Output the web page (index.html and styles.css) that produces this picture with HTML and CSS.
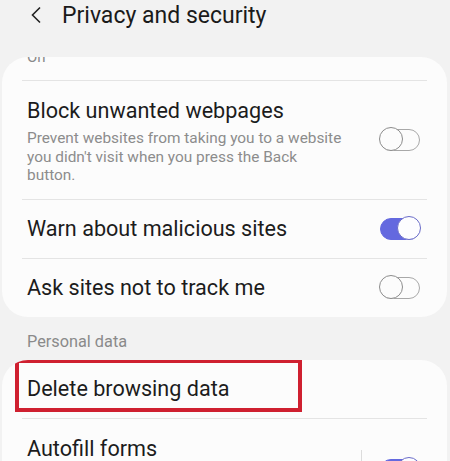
FILE: index.html
```html
<!DOCTYPE html>
<html lang="en">
  <head>
    <meta charset="UTF-8" />
    <meta name="viewport" content="width=device-width, initial-scale=1.0" />
    <title>Privacy and security</title>
    <link rel="stylesheet" href="styles.css">
  </head>
  <body>
    <header class="top-bar">
      <svg class="back" width="12" height="18" viewBox="0 0 12 18">
        <path d="M10 1.5 L2.5 9 L10 16.5" fill="none" stroke="#222" stroke-width="1.6" />
      </svg>
      <h1 class="title">Privacy and security</h1>
    </header>

    <div class="card">
      <div class="row-clipped"><span>On</span></div>

      <div class="row row-tall">
        <div class="row-text">
          <div class="row-title">Block unwanted webpages</div>
          <div class="row-sub">Prevent websites from taking you to a website<br>you didn't visit when you press the Back<br>button.</div>
        </div>
        <span class="switch"></span>
      </div>

      <div class="row">
        <div class="row-text">
          <div class="row-title">Warn about malicious sites</div>
        </div>
        <span class="switch on"></span>
      </div>

      <div class="row">
        <div class="row-text">
          <div class="row-title">Ask sites not to track me</div>
        </div>
        <span class="switch"></span>
      </div>
    </div>

    <div class="section-label">Personal data</div>

    <div class="card">
      <div class="row row-first">
        <div class="row-text">
          <div class="row-title">Delete browsing data</div>
        </div>
        <span class="highlight"></span>
      </div>

      <div class="row row-split">
        <div class="row-text">
          <div class="row-title">Autofill forms</div>
        </div>
        <span class="divider-v"></span>
        <span class="switch on"></span>
      </div>
    </div>
  </body>
</html>
```

FILE: styles.css
```css
html,
body {
  height: 100%;
}
body {
  margin: 0;
  background-color: #f2f2f2;
  font-family: Roboto, "Noto Sans", sans-serif;
  color: #1c1c1c;
  overflow: hidden;
}
.top-bar {
  display: flex;
  align-items: center;
  height: 30px;
  padding: 0 0 0 30px;
}
.back {
  margin-right: 20px;
}
.title {
  margin: 0;
  font-size: 23px;
  font-weight: normal;
  color: #1a1a1a;
}
.card {
  position: relative;
  background: #fcfcfc;
  border-radius: 26px;
  margin: 27px 3px 0 2px;
  overflow: hidden;
}
.row-clipped {
  height: 23px;
  overflow: hidden;
}
.row-clipped span {
  display: block;
  margin: -9px 0 0 25px;
  font-size: 15px;
  color: #8a8a8a;
}
.row {
  position: relative;
  display: flex;
  align-items: center;
  min-height: 58px;
  margin: 0 20px;
  padding: 0 7px 0 5px;
  border-top: 1px solid #e4e4e4;
}
.row-first {
  border-top: none;
}
.row-text {
  flex: 1;
}
.row-tall .row-text {
  padding: 17px 0 14px;
}
.row-title {
  font-size: 21.6px;
  line-height: 26px;
}
.row-sub {
  font-size: 15.4px;
  line-height: 18.5px;
  color: #8c8c8c;
  margin-top: 5px;
  white-space: nowrap;
}
.row-split {
  min-height: 102px;
}
.row-split .row-text {
  align-self: flex-start;
  padding-top: 17px;
}
.switch {
  position: relative;
  width: 40px;
  height: 22px;
  flex-shrink: 0;
  margin-left: 10px;
  box-sizing: border-box;
  border: 1.5px solid #a8a8a8;
  border-radius: 11px;
}
.switch::after {
  content: "";
  position: absolute;
  left: -2px;
  top: -2.5px;
  width: 24px;
  height: 24px;
  box-sizing: border-box;
  border: 1.5px solid #8c8c8c;
  border-radius: 50%;
  background: #fcfcfc;
}
.switch.on {
  background: #6469df;
  border-color: #6469df;
}
.switch.on::after {
  left: auto;
  right: -2px;
  border-color: #6a6cc8;
  background: #fdfdff;
}
.section-label {
  padding: 16px 0 0 27px;
  font-size: 16.3px;
  line-height: 18px;
  color: #8a8a8a;
}
.section-label + .card {
  margin-top: 9px;
}
.highlight {
  position: absolute;
  left: -7px;
  top: -1px;
  width: 287px;
  height: 53px;
  box-sizing: border-box;
  border: 4px solid #cf2030;
}
.divider-v {
  width: 1px;
  height: 40px;
  background: #dcdcdc;
  margin-right: 18px;
}
.row-split .switch {
  margin-left: 0;
}
```
